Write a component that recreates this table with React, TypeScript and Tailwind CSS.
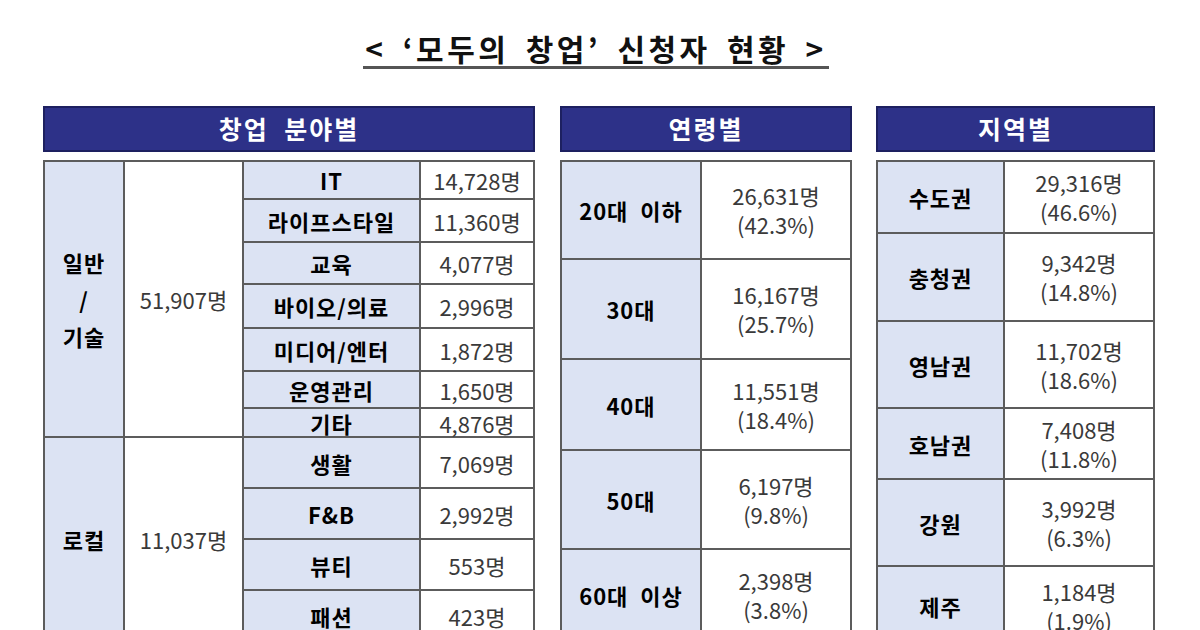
import React from "react";

const fieldGeneral = [
  { name: "IT", count: "14,728명", h: "h-[38px]" },
  { name: "라이프스타일", count: "11,360명", h: "h-[43px]" },
  { name: "교육", count: "4,077명", h: "h-[42px]" },
  { name: "바이오/의료", count: "2,996명", h: "h-[44px]" },
  { name: "미디어/엔터", count: "1,872명", h: "h-[43px]" },
  { name: "운영관리", count: "1,650명", h: "h-[37px]" },
  { name: "기타", count: "4,876명", h: "h-[29px]" },
];

const fieldLocal = [
  { name: "생활", count: "7,069명" },
  { name: "F&B", count: "2,992명" },
  { name: "뷰티", count: "553명" },
  { name: "패션", count: "423명" },
];

const ages = [
  { label: "20대 이하", count: "26,631명", pct: "(42.3%)", h: "h-[98px]" },
  { label: "30대", count: "16,167명", pct: "(25.7%)", h: "h-[100px]" },
  { label: "40대", count: "11,551명", pct: "(18.4%)", h: "h-[91px]" },
  { label: "50대", count: "6,197명", pct: "(9.8%)", h: "h-[99px]" },
  { label: "60대 이상", count: "2,398명", pct: "(3.8%)", h: "h-[92px]" },
];

const regions = [
  { label: "수도권", count: "29,316명", pct: "(46.6%)", h: "h-[72px]" },
  { label: "충청권", count: "9,342명", pct: "(14.8%)", h: "h-[88px]" },
  { label: "영남권", count: "11,702명", pct: "(18.6%)", h: "h-[87px]" },
  { label: "호남권", count: "7,408명", pct: "(11.8%)", h: "h-[71px]" },
  { label: "강원", count: "3,992명", pct: "(6.3%)", h: "h-[87px]" },
  { label: "제주", count: "1,184명", pct: "(1.9%)", h: "h-[80px]" },
];

const labelCell =
  "border-2 border-[#5c5c5c] bg-[#dce3f3] text-center align-middle p-0 text-[22px] leading-[24px] font-bold tracking-[1px] text-black";
const valueCell =
  "border-2 border-[#5c5c5c] bg-white text-center align-middle p-0 text-[22px] leading-[24px] text-[#3a3a3a]";

function PanelHeader({ title }: { title: string }) {
  return (
    <div className="h-[46px] bg-[#2d3188] border-2 border-[#1d2060] flex items-center justify-center text-white text-[25px] font-bold tracking-[2px] [word-spacing:8px]">
      {title}
    </div>
  );
}

function ShareTable({
  rows,
  first,
}: {
  rows: { label: string; count: string; pct: string; h: string }[];
  first: string;
}) {
  return (
    <table className="w-full border-collapse border-2 border-[#555] table-fixed">
      <colgroup>
        <col className={first} />
        <col />
      </colgroup>
      <tbody>
        {rows.map((r) => (
          <tr key={r.label} className={r.h}>
            <td className={`${labelCell} [word-spacing:6px]`}>{r.label}</td>
            <td className={`${valueCell} leading-[29px]`}>
              <div>{r.count}</div>
              <div>{r.pct}</div>
            </td>
          </tr>
        ))}
      </tbody>
    </table>
  );
}

export default function App() {
  return (
    <div className="w-[1200px] h-[630px] overflow-hidden bg-white font-['Noto_Sans_CJK_KR','Noto_Sans',sans-serif]">
      {/* Title */}
      <div className="flex justify-center pt-[32px] pr-[8px]">
        <h1 className="text-[30px] leading-[32px] font-bold tracking-[3.5px] [word-spacing:6px] text-[#111] pb-[2px] px-[2px] border-b-[3px] border-[#555]">
          &lt; ‘모두의 창업’ 신청자 현황 &gt;
        </h1>
      </div>

      <div className="flex items-start pl-[43px] mt-[37px] gap-[25px]">
        {/* 창업 분야별 */}
        <div className="w-[492px]">
          <PanelHeader title="창업 분야별" />
          <table className="mt-[8px] w-full border-collapse border-2 border-[#555] table-fixed">
            <colgroup>
              <col className="w-[80px]" />
              <col className="w-[119px]" />
              <col className="w-[177px]" />
              <col />
            </colgroup>
            <tbody>
              {fieldGeneral.map((f, i) => (
                <tr key={f.name} className={f.h}>
                  {i === 0 && (
                    <>
                      <td rowSpan={7} className={`${labelCell} leading-[37px]`}>
                        <div>일반</div>
                        <div>/</div>
                        <div>기술</div>
                      </td>
                      <td rowSpan={7} className={valueCell}>
                        51,907명
                      </td>
                    </>
                  )}
                  <td className={labelCell}>{f.name}</td>
                  <td className={valueCell}>{f.count}</td>
                </tr>
              ))}
              {fieldLocal.map((f, i) => (
                <tr key={f.name} className="h-[51px]">
                  {i === 0 && (
                    <>
                      <td rowSpan={4} className={labelCell}>
                        로컬
                      </td>
                      <td rowSpan={4} className={valueCell}>
                        11,037명
                      </td>
                    </>
                  )}
                  <td className={labelCell}>{f.name}</td>
                  <td className={valueCell}>{f.count}</td>
                </tr>
              ))}
            </tbody>
          </table>
        </div>

        {/* 연령별 */}
        <div className="w-[292px]">
          <PanelHeader title="연령별" />
          <div className="mt-[8px]">
            <ShareTable rows={ages} first="w-[140px]" />
          </div>
        </div>

        {/* 지역별 */}
        <div className="w-[279px] -ml-[1px]">
          <PanelHeader title="지역별" />
          <div className="mt-[8px]">
            <ShareTable rows={regions} first="w-[127px]" />
          </div>
        </div>
      </div>
    </div>
  );
}
